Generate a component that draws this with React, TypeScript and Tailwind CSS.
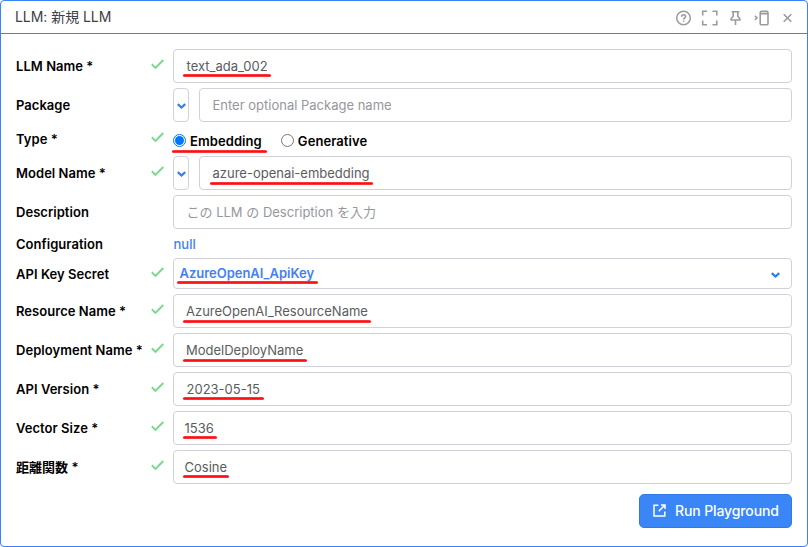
import React from "react";

const MARK = "absolute h-[3px] rounded-full bg-[linear-gradient(#ff5557,#fb1014_35%,#fb1014_65%,#ff5557)]";

function Check() {
  return (
    <svg className="mb-1 h-3 w-3.5 shrink-0" viewBox="0 0 14 12" fill="none" stroke="#79d88c" strokeWidth="1.9">
      <path d="M0.8 6.3 L4.5 9.9 L12.3 2" />
    </svg>
  );
}

function Chevron({ className }: { className?: string }) {
  return (
    <svg className={className} width="9" height="6" viewBox="0 0 9 6" fill="none" stroke="currentColor" strokeWidth="2.2">
      <path d="M0.8 1.1 L4.5 4.5 L8.2 1.1" />
    </svg>
  );
}

type RowProps = { label: string; checked?: boolean; height?: string; children: React.ReactNode };

function Row({ label, checked, height = "h-[34px]", children }: RowProps) {
  return (
    <div className={`flex ${height}`}>
      <div className="flex w-[157px] shrink-0 items-center">
        <span className="w-[135px] whitespace-nowrap font-semibold tracking-[0.04px] text-black">{label}</span>
        {checked && <Check />}
      </div>
      {children}
    </div>
  );
}

type FieldProps = { value: string; pad?: string; mark?: string; muted?: boolean };

function Field({ value, pad = "pl-[12.5px]", mark, muted }: FieldProps) {
  return (
    <div
      className={`relative flex flex-1 items-center rounded-[4px] border border-[#d1d1d9] ${pad} ${
        muted ? "text-[#96969c]" : "text-[#5b5b60]"
      }`}
    >
      <span className="whitespace-nowrap">{value}</span>
      {mark && <span className={`${MARK} ${mark}`} />}
    </div>
  );
}

function MiniSelect() {
  return (
    <div className="mr-2.5 flex w-4 items-center justify-center rounded-[4px] border border-[#d1d1d9] text-[#397cf0]">
      <Chevron className="mt-px" />
    </div>
  );
}

function HeaderIcons() {
  return (
    <svg className="h-5 w-[120px]" viewBox="0 0 120 20" fill="none" stroke="#9b9b9e" strokeWidth="1.6">
      <circle cx="10.5" cy="11" r="6.8" strokeWidth="1.5" />
      <path d="M8.6 9.7 C8.6 7.1 12.6 7.2 12.6 9.4 C12.6 10.8 10.6 10.8 10.6 12.5 M10.6 13.5 V14.7" />
      <path d="M29.7 8.5 V4.2 H34 M39.5 4.2 H43.8 V8.5 M43.8 13.5 V17.8 H39.5 M34 17.8 H29.7 V13.5" />
      <path d="M58.6 4.7 H66.4 M60.2 4.7 V9.2 L58.2 11.5 V13 H66.8 V11.5 L64.8 9.2 V4.7 M62.5 13 V18" />
      <path d="M81.9 8.7 L84 10.8 L81.9 12.9" />
      <rect x="87.2" y="4.4" width="7.8" height="13.4" rx="1.4" />
      <path d="M87.2 6.7 H95" />
      <path d="M110.7 7.2 L118.3 14.8 M118.3 7.2 L110.7 14.8" />
    </svg>
  );
}

export default function App() {
  return (
    <main className="flex h-[547px] w-[808px] flex-col rounded-[4px] border border-[#3b82f6] bg-white font-[Inter,'Noto_Sans_CJK_JP',sans-serif] text-[13px] leading-4">
      <header className="flex h-[33px] items-center justify-between border-b border-[#3b82f6] pr-[14px] pl-3.5 text-[#404045]">
        <h1 className="text-[14px] font-normal tracking-[-0.05px]">LLM: 新規 LLM</h1>
        <HeaderIcons />
      </header>
      <form className="flex flex-col gap-[5px] pt-[15px] pr-[15px] pl-[15px]">
        <Row label="LLM Name *" checked>
          <Field value="text_ada_002" mark="left-[9px] top-6 w-[88px]" />
        </Row>
        <Row label="Package">
          <MiniSelect />
          <Field value="Enter optional Package name" muted />
        </Row>
        <Row label="Type *" checked height="h-6">
          <div className="relative mt-[3px] flex items-center font-semibold tracking-[0.08px] text-black">
            <span className="mr-1 flex h-[13px] w-[13px] items-center justify-center rounded-full border border-[#0075ff]">
              <span className="h-[9px] w-[9px] rounded-full bg-[#0075ff]" />
            </span>
            Embedding
            <span className="mr-1 ml-[19px] h-[13px] w-[13px] rounded-full border border-[#767676]" />
            Generative
            <span className={`${MARK} -left-px top-5 w-[95px]`} />
          </div>
        </Row>
        <Row label="Model Name *" checked>
          <MiniSelect />
          <Field value="azure-openai-embedding" mark="left-[10px] top-[25px] w-[163px]" />
        </Row>
        <Row label="Description">
          <Field value="この LLM の Description を入力" muted />
        </Row>
        <Row label="Configuration" height="h-[19px]">
          <span className="flex items-center pl-[0.5px] font-medium tracking-[0.05px] text-[#4480f5]">null</span>
        </Row>
        <Row label="API Key Secret" checked height="h-[31px]">
          <div className="relative flex flex-1 items-center justify-between rounded-[4px] border border-[#d1d1d9] pr-[11px] pl-[5.5px] font-semibold text-[#4480f5]">
            <span className="-mt-px tracking-[-0.03px]">AzureOpenAI_ApiKey</span>
            <Chevron className="mt-0.5 text-[#217ff3]" />
            <span className={`${MARK} left-[3px] top-[22px] w-[141px]`} />
          </div>
        </Row>
        <Row label="Resource Name *" checked>
          <Field value="AzureOpenAI_ResourceName" pad="pl-3" mark="left-[9px] top-[25px] w-[188px]" />
        </Row>
        <Row label="Deployment Name *" checked>
          <Field value="ModelDeployName" pad="pl-3" mark="left-[9px] top-[25px] w-[124px]" />
        </Row>
        <Row label="API Version *" checked>
          <Field value="2023-05-15" mark="left-[9px] top-6 w-[81px]" />
        </Row>
        <Row label="Vector Size *" checked>
          <Field value="1536" pad="pl-[10.5px]" mark="left-[9px] top-6 w-[34px]" />
        </Row>
        <Row label="距離関数 *" checked>
          <Field value="Cosine" pad="pl-[10.5px]" mark="left-[9px] top-6 w-[46px]" />
        </Row>
        <div className="mt-[5px] flex justify-end">
          <button
            type="button"
            className="flex h-[34px] w-[153px] items-center gap-[9px] rounded-[5px] border border-[#3279e6] bg-[#3b86f7] pl-[13px] text-[14px] font-medium tracking-[-0.12px] text-white"
          >
            <svg className="mb-0.5" width="13" height="13" viewBox="0 0 13 13" fill="none" stroke="white" strokeWidth="1.5">
              <path d="M5.4 1.2 H1 V12 H11.8 V7.6 M8 1 H12 V5 M12 1 L5.8 7.2" />
            </svg>
            Run Playground
          </button>
        </div>
      </form>
    </main>
  );
}
